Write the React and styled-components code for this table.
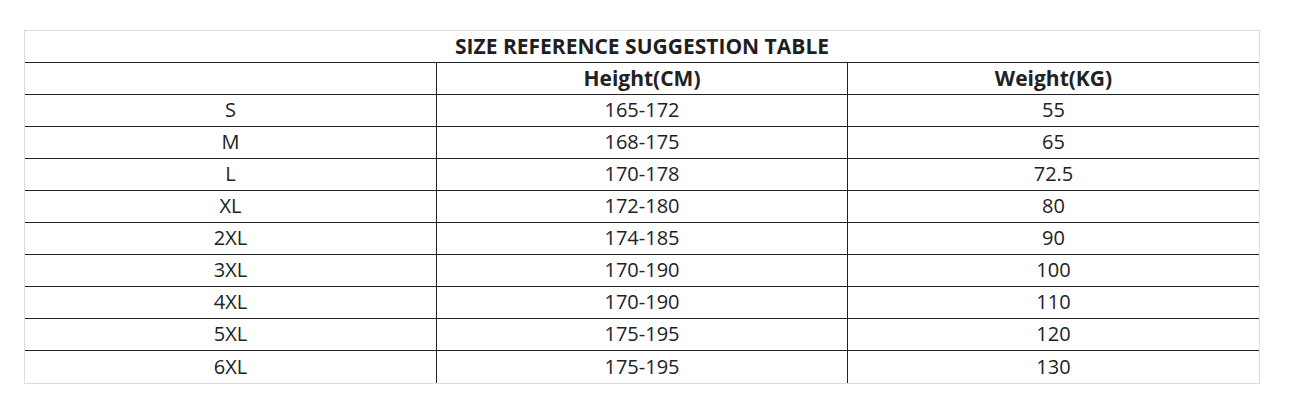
import React from 'react';
import styled, { createGlobalStyle } from 'styled-components';

const GlobalStyle = createGlobalStyle`
  body {
    margin: 0;
    background: #fff;
    font-family: "Open Sans", "Liberation Sans", sans-serif;
    color: #222;
  }
`;

const Page = styled.div`
  padding: 30px 0 0 24px;
`;

const Table = styled.div`
  width: 1236px;
  box-sizing: border-box;
  border: 1px solid #dcdcdc;
`;

const Title = styled.div`
  height: 32px;
  box-sizing: border-box;
  padding-bottom: 2px;
  border-bottom: 1px solid #222;
  display: flex;
  align-items: center;
  justify-content: center;
  font-size: 21px;
  font-weight: 700;
  color: #1f1f1f;
`;

const Row = styled.div`
  display: grid;
  grid-template-columns: 412px 411px 1fr;
  height: 32px;
  box-sizing: border-box;
  border-bottom: ${(p) => (p.$last ? 'none' : '1px solid #222')};
`;

const Cell = styled.div`
  display: flex;
  align-items: center;
  justify-content: center;
  box-sizing: border-box;
  padding-bottom: 2px;
  border-right: 1px solid #222;
  font-size: ${(p) => (p.$head ? '21px' : '20px')};
  font-weight: ${(p) => (p.$head ? 700 : 400)};
  color: #222;
  &:last-child {
    border-right: none;
  }
`;

const rows = [
  ['S', '165-172', '55'],
  ['M', '168-175', '65'],
  ['L', '170-178', '72.5'],
  ['XL', '172-180', '80'],
  ['2XL', '174-185', '90'],
  ['3XL', '170-190', '100'],
  ['4XL', '170-190', '110'],
  ['5XL', '175-195', '120'],
  ['6XL', '175-195', '130'],
];

export default function App() {
  return (
    <Page>
      <GlobalStyle />
      <Table>
        <Title>SIZE REFERENCE SUGGESTION TABLE</Title>
        <Row>
          <Cell $head />
          <Cell $head>Height(CM)</Cell>
          <Cell $head>Weight(KG)</Cell>
        </Row>
        {rows.map((r, i) => (
          <Row key={r[0]} $last={i === rows.length - 1}>
            {r.map((v, j) => (
              <Cell key={j}>{v}</Cell>
            ))}
          </Row>
        ))}
      </Table>
    </Page>
  );
}
